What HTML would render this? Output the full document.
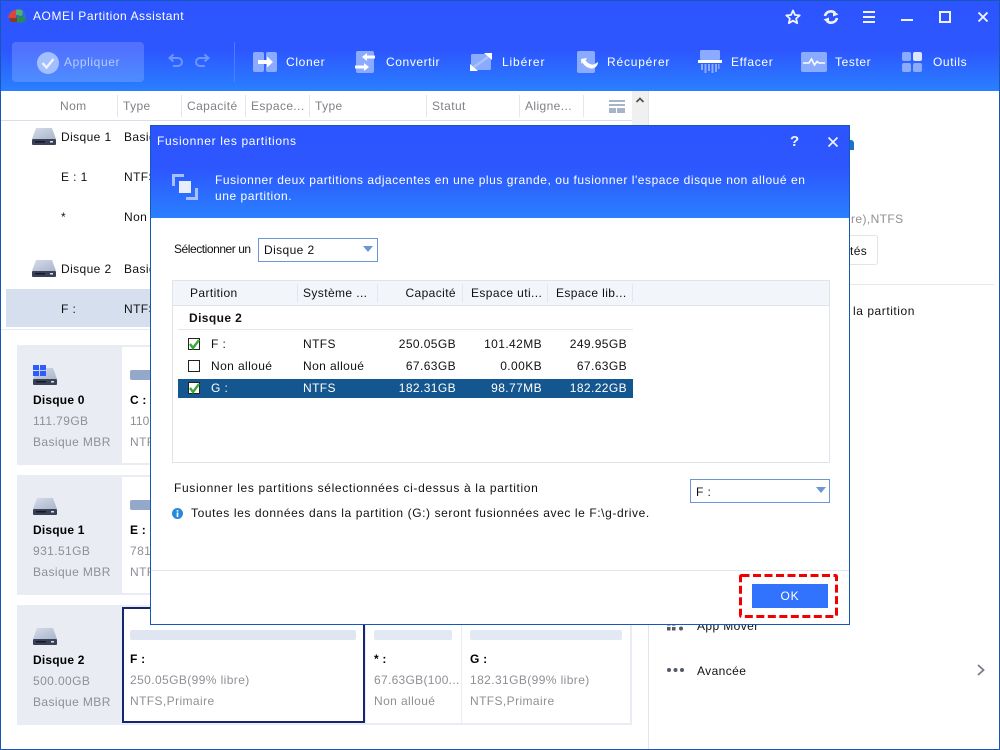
<!DOCTYPE html>
<html lang="fr"><head><meta charset="utf-8"><title>AOMEI Partition Assistant</title>
<style>
html,body{margin:0;padding:0;width:1000px;height:750px;overflow:hidden;background:#fff}
#app{position:relative;width:1000px;height:750px;overflow:hidden;font-family:"Liberation Sans",sans-serif;font-size:12px;color:#111;background:#fff}
.t{position:absolute;white-space:nowrap;line-height:16px;height:16px;letter-spacing:.4px}
.b{position:absolute}
.w{color:#fff}.g{color:#8f8f96}.h{color:#808087}.bd{font-weight:bold;letter-spacing:.2px}
.r{text-align:right}
svg{position:absolute;overflow:visible}
</style></head><body><div id="app">

<!-- main header -->
<div class="b" style="left:0;top:0;width:1000px;height:91px;background:linear-gradient(#2d55ff 0,#2d56ff 55%,#2a80ff 100%)"></div>
<svg style="left:8px;top:9px" width="19" height="16" viewBox="0 0 19 16"><path d="M0 9C1 4 4 1 8 1L8 9Z" fill="#d8453f"/><path d="M8 1C9 0 13 0 15 2L14 7L8 6Z" fill="#4fb36a"/><path d="M15 2C17 3 18 6 18 8L14 8Z" fill="#2f6fd0"/><path d="M1 9L9 9L9 13L3 13Z" fill="#8c3a22"/><path d="M9 7L18 8L17 12L13 14L9 13Z" fill="#2c8a57"/></svg>
<div class="t w" style="left:33px;top:8px;letter-spacing:.55px">AOMEI Partition Assistant</div>

<!-- window controls -->
<svg style="left:785px;top:9px" width="16" height="16" viewBox="0 0 16 16"><path d="M8 1.500L10 6L14.700 6.400L11.100 9.500L12.200 14.200L8 11.700L3.800 14.200L4.900 9.500L1.300 6.400L6 6Z" fill="none" stroke="#eef3ff" stroke-width="1.800" stroke-linejoin="round"/></svg>
<svg style="left:823px;top:9px" width="16" height="16" viewBox="0 0 16 16" fill="none" stroke="#eef3ff" stroke-width="2.600"><path d="M2 7A6 6 0 0 1 12 4"/><path d="M14 9A6 6 0 0 1 4 12"/><path d="M10 1.500L15.500 5.500L10 7.500Z" fill="#eef3ff" stroke="none"/><path d="M6 14.500L.5 10.500L6 8.500Z" fill="#eef3ff" stroke="none"/></svg>
<div class="b" style="left:863px;top:11px;width:12px;height:2px;background:#eef3ff"></div>
<div class="b" style="left:863px;top:16px;width:12px;height:2px;background:#eef3ff"></div>
<div class="b" style="left:863px;top:21px;width:12px;height:2px;background:#eef3ff"></div>
<div class="b" style="left:901px;top:19px;width:12px;height:2px;background:#eef3ff"></div>
<div class="b" style="left:939px;top:11px;width:8px;height:8px;border:2px solid #eef3ff"></div>
<svg style="left:978px;top:12px" width="10" height="10" viewBox="0 0 10 10"><path d="M.5 .5L9.500 9.500M9.500 .5L.5 9.500" stroke="#eef3ff" stroke-width="1.900"/></svg>

<!-- toolbar -->
<div class="b" style="left:12px;top:42px;width:132px;height:40px;border-radius:4px;background:rgba(255,255,255,.17)"></div>
<svg style="left:37px;top:52px" width="22" height="22" viewBox="0 0 22 22"><circle cx="11" cy="11" r="11" fill="#a4bfff"/><path d="M5.500 11L9.500 15.500L16.500 7" fill="none" stroke="#eef3ff" stroke-width="2.400"/></svg>
<div class="t" style="left:64px;top:54px;color:#b6ccff;letter-spacing:.6px">Appliquer</div>
<svg style="left:168px;top:54px" width="16" height="14" viewBox="0 0 16 14" fill="none" stroke="#6c95ff" stroke-width="2"><path d="M2 4H10A4 4 0 0 1 10 12H5"/><path d="M5.500 .5L1.500 4L5.500 7.500"/></svg>
<svg style="left:194px;top:54px" width="16" height="14" viewBox="0 0 16 14" fill="none" stroke="#6c95ff" stroke-width="2"><path d="M14 4H6A4 4 0 0 0 6 12H11"/><path d="M10.500 .5L14.500 4L10.500 7.500"/></svg>
<div class="b" style="left:234px;top:42px;width:1px;height:40px;background:#4f7dff"></div>

<svg style="left:253px;top:52px" width="24" height="20" viewBox="0 0 24 20"><rect x="0" y="0" width="11" height="20" rx="2" fill="#8aabff"/><rect x="13" y="0" width="11" height="20" rx="2" fill="#8aabff"/><path d="M5 8H14V4.500L20 10L14 15.500V12H5Z" fill="#fff"/></svg>
<div class="t w" style="left:286px;top:54px;letter-spacing:.65px">Cloner</div>
<svg style="left:355px;top:51px" width="21" height="22" viewBox="0 0 21 22"><rect x="1" y="0" width="18" height="22" rx="2" fill="#8aabff"/><path d="M7 6L12 2V4.500H20V7.500H12V10Z" fill="#fff"/><path d="M14 16L9 20V17.500H0V14.500H9V12Z" fill="#fff"/></svg>
<div class="t w" style="left:386px;top:54px;letter-spacing:.6px">Convertir</div>
<svg style="left:470px;top:53px" width="22" height="18" viewBox="0 0 22 18"><rect x="1" y="1" width="20" height="16" rx="1.500" fill="#8aabff"/><path d="M4 14L18 4" stroke="#a8c2ff" stroke-width="2.500"/><path d="M14 0H22V7Z" fill="#fff"/><path d="M0 11V18H8Z" fill="#fff"/></svg>
<div class="t w" style="left:502px;top:54px;letter-spacing:.85px">Libérer</div>
<svg style="left:577px;top:51px" width="22" height="22" viewBox="0 0 22 22"><rect x="0" y="0" width="18" height="22" rx="2" fill="#8aabff"/><path d="M4 8L10 7L8.500 9.500C11 12.500 14 14 17 13.500L21 11C21 15 17 19 12 17C9 16 6.500 13.500 5.500 11.500L4.500 13Z" fill="#fff"/></svg>
<div class="t w" style="left:607px;top:54px;letter-spacing:.8px">Récupérer</div>
<svg style="left:698px;top:50px" width="24" height="23" viewBox="0 0 24 23"><rect x="2" y="0" width="20" height="10" rx="1.500" fill="#8aabff"/><rect x="0" y="10" width="24" height="3" fill="#fff"/><path d="M3 14h2v6H3zM6.500 14h2v9h-2zM10 14h2v7h-2zM13.500 14h2v9h-2zM17 14h2v8h-2zM20 14h1.500v5H20z" fill="#8aabff"/></svg>
<div class="t w" style="left:731px;top:54px;letter-spacing:.65px">Effacer</div>
<svg style="left:801px;top:52px" width="26" height="20" viewBox="0 0 26 20"><rect width="26" height="20" rx="2" fill="#8aabff"/><path d="M2 11H8L10.500 7L13.500 13L16 9.500L18 11H24" fill="none" stroke="#fff" stroke-width="1.600"/></svg>
<div class="t w" style="left:835px;top:54px;letter-spacing:.6px">Tester</div>
<svg style="left:902px;top:52px" width="20" height="20" viewBox="0 0 20 20"><rect width="9" height="9" rx="2" fill="#8aabff"/><rect x="11" width="9" height="9" rx="2" fill="#dbe5ff"/><rect y="11" width="9" height="9" rx="2" fill="#8aabff"/><rect x="11" y="11" width="9" height="9" rx="2" fill="#8aabff"/></svg>
<div class="t w" style="left:933px;top:54px;letter-spacing:.6px">Outils</div>

<!-- table header -->
<div class="t h" style="left:60px;top:98px">Nom</div>
<div class="t h" style="left:123px;top:98px">Type</div>
<div class="t h" style="left:187px;top:98px">Capacité</div>
<div class="t h" style="left:251px;top:98px">Espace...</div>
<div class="t h" style="left:315px;top:98px">Type</div>
<div class="t h" style="left:432px;top:98px">Statut</div>
<div class="t h" style="left:525px;top:98px">Aligne...</div>
<div class="b" style="left:117px;top:95px;width:1px;height:22px;background:#e4e7ee"></div>
<div class="b" style="left:181px;top:95px;width:1px;height:22px;background:#e4e7ee"></div>
<div class="b" style="left:245px;top:95px;width:1px;height:22px;background:#e4e7ee"></div>
<div class="b" style="left:309px;top:95px;width:1px;height:22px;background:#e4e7ee"></div>
<div class="b" style="left:426px;top:95px;width:1px;height:22px;background:#e4e7ee"></div>
<div class="b" style="left:519px;top:95px;width:1px;height:22px;background:#e4e7ee"></div>
<div class="b" style="left:583px;top:95px;width:1px;height:22px;background:#e4e7ee"></div>
<div class="b" style="left:609px;top:100px;width:16px;height:2px;background:#a6b4c6"></div>
<div class="b" style="left:609px;top:104px;width:16px;height:2px;background:#a6b4c6"></div>
<div class="b" style="left:609px;top:108px;width:7px;height:5px;background:#a6b4c6"></div>
<div class="b" style="left:617px;top:108px;width:8px;height:5px;background:#a6b4c6"></div>
<div class="b" style="left:0;top:120px;width:632px;height:1px;background:#d8deea"></div>
<div class="b" style="left:632px;top:91px;width:16px;height:239px;background:#f0f0f0"></div>
<div class="b" style="left:648px;top:91px;width:1px;height:659px;background:#dfe5f0"></div>
<svg style="left:636px;top:97px" width="8" height="6" viewBox="0 0 8 6"><path d="M.5 5L4 1.500L7.500 5" fill="none" stroke="#555" stroke-width="1.800"/></svg>

<!-- tree rows -->
<svg style="left:32px;top:128px" width="24" height="17" viewBox="0 0 24 17"><defs><linearGradient id="hd" x1="0" y1="0" x2="1" y2="1"><stop offset="0" stop-color="#d6dcea"/><stop offset="1" stop-color="#a9b5cb"/></linearGradient></defs><path d="M4 0H20L24 11H0Z" fill="url(#hd)"/><rect y="11" width="24" height="6" rx="1" fill="#3b4155"/><rect x="3" y="13" width="10" height="1.500" fill="#14182a"/><rect x="18" y="13" width="3" height="1.500" fill="#d8e4f4"/></svg>
<div class="t" style="left:61px;top:129px">Disque 1</div><div class="t" style="left:124px;top:129px">Basique MBR</div>
<div class="t" style="left:61px;top:169px">E : 1</div><div class="t" style="left:124px;top:169px">NTFS</div>
<div class="t" style="left:61px;top:209px">*</div><div class="t" style="left:124px;top:209px">Non alloué</div>
<svg style="left:32px;top:260px" width="24" height="17" viewBox="0 0 24 17"><path d="M4 0H20L24 11H0Z" fill="url(#hd)"/><rect y="11" width="24" height="6" rx="1" fill="#3b4155"/><rect x="3" y="13" width="10" height="1.500" fill="#14182a"/><rect x="18" y="13" width="3" height="1.500" fill="#d8e4f4"/></svg>
<div class="t" style="left:61px;top:261px">Disque 2</div><div class="t" style="left:124px;top:261px">Basique MBR</div>
<div class="b" style="left:6px;top:289px;width:626px;height:38px;background:#d5dfee"></div>
<div class="t" style="left:61px;top:301px">F :</div><div class="t" style="left:124px;top:301px">NTFS</div>
<div class="b" style="left:0;top:329px;width:632px;height:1px;background:#e6eaf1"></div>

<!-- disk cards -->
<div class="b" style="left:17px;top:345px;width:615px;height:120px;background:#e9ecf3"></div>
<div class="b" style="left:122px;top:347px;width:508px;height:116px;background:#fff"></div>
<div class="b" style="left:17px;top:475px;width:615px;height:120px;background:#e9ecf3"></div>
<div class="b" style="left:122px;top:477px;width:508px;height:116px;background:#fff"></div>
<div class="b" style="left:17px;top:605px;width:615px;height:120px;background:#e9ecf3"></div>
<div class="b" style="left:122px;top:607px;width:243px;height:116px;background:#fff;box-shadow:inset 0 0 0 2px #14266f"></div>
<div class="b" style="left:366px;top:607px;width:95px;height:116px;background:#fff"></div>
<div class="b" style="left:462px;top:607px;width:168px;height:116px;background:#fff"></div>

<svg style="left:33px;top:365px" width="24" height="20" viewBox="0 0 24 20"><path d="M4 3H20L24 14H0Z" fill="url(#hd)"/><rect y="14" width="24" height="6" rx="1" fill="#3b4155"/><rect x="3" y="16" width="10" height="1.500" fill="#14182a"/><rect x="18" y="16" width="3" height="1.500" fill="#d8e4f4"/><path d="M0 0h6v5H0zM7 0h6v5H7zM0 6h6v5H0zM7 6h6v5H7z" fill="#2d5cff"/></svg>
<div class="t bd" style="left:33px;top:392px;color:#000">Disque 0</div>
<div class="t g" style="left:33px;top:413px">111.79GB</div>
<div class="t g" style="left:33px;top:434px">Basique MBR</div>
<div class="b" style="left:130px;top:370px;width:226px;height:10px;border-radius:2px;background:#94a9c9"></div>
<div class="t bd" style="left:130px;top:392px;color:#000">C : System</div>
<div class="t g" style="left:130px;top:413px;letter-spacing:.1px">110.58GB</div>
<div class="t g" style="left:130px;top:434px">NTFS,Primaire</div>

<svg style="left:33px;top:498px" width="24" height="17" viewBox="0 0 24 17"><path d="M4 0H20L24 11H0Z" fill="url(#hd)"/><rect y="11" width="24" height="6" rx="1" fill="#3b4155"/><rect x="3" y="13" width="10" height="1.500" fill="#14182a"/><rect x="18" y="13" width="3" height="1.500" fill="#d8e4f4"/></svg>
<div class="t bd" style="left:33px;top:522px;color:#000">Disque 1</div>
<div class="t g" style="left:33px;top:543px">931.51GB</div>
<div class="t g" style="left:33px;top:564px">Basique MBR</div>
<div class="b" style="left:130px;top:500px;width:226px;height:10px;border-radius:2px;background:#94a9c9"></div>
<div class="t bd" style="left:130px;top:522px;color:#000">E : 1</div>
<div class="t g" style="left:130px;top:543px">781.51GB</div>
<div class="t g" style="left:130px;top:564px">NTFS,Primaire</div>

<svg style="left:33px;top:628px" width="24" height="17" viewBox="0 0 24 17"><path d="M4 0H20L24 11H0Z" fill="url(#hd)"/><rect y="11" width="24" height="6" rx="1" fill="#3b4155"/><rect x="3" y="13" width="10" height="1.500" fill="#14182a"/><rect x="18" y="13" width="3" height="1.500" fill="#d8e4f4"/></svg>
<div class="t bd" style="left:33px;top:652px;color:#000">Disque 2</div>
<div class="t g" style="left:33px;top:673px">500.00GB</div>
<div class="t g" style="left:33px;top:694px">Basique MBR</div>
<div class="b" style="left:130px;top:630px;width:226px;height:10px;border-radius:2px;background:#dfe6f2"></div>
<div class="t bd" style="left:130px;top:651px;color:#000">F :</div>
<div class="t g" style="left:130px;top:672px">250.05GB(99% libre)</div>
<div class="t g" style="left:130px;top:693px">NTFS,Primaire</div>
<div class="b" style="left:374px;top:630px;width:78px;height:10px;border-radius:2px;background:#e3e9f3"></div>
<div class="t bd" style="left:374px;top:651px;color:#000">* :</div>
<div class="t g" style="left:374px;top:672px;letter-spacing:.3px">67.63GB(100...</div>
<div class="t g" style="left:374px;top:693px">Non alloué</div>
<div class="b" style="left:470px;top:630px;width:152px;height:10px;border-radius:2px;background:#e3e9f3"></div>
<div class="t bd" style="left:470px;top:651px;color:#000">G :</div>
<div class="t g" style="left:470px;top:672px">182.31GB(99% libre)</div>
<div class="t g" style="left:470px;top:693px">NTFS,Primaire</div>

<!-- right panel -->
<div class="b" style="left:848px;top:140px;width:6px;height:10px;background:#1a73c8;border-radius:0 3px 0 0"></div>
<div class="t g" style="left:851px;top:211px">re),NTFS</div>
<div class="b" style="left:800px;top:235px;width:76px;height:28px;border:1px solid #dfe3ea;border-radius:3px"></div>
<div class="t" style="left:850px;top:243px">tés</div>
<div class="b" style="left:649px;top:284px;width:345px;height:1px;background:#e3e7f0"></div>
<div class="t" style="left:853px;top:303px;letter-spacing:.55px">la partition</div>
<svg style="left:667px;top:622px" width="17" height="10" viewBox="0 0 17 10" fill="#555a68"><rect width="3.500" height="3.500" y="0"/><rect x="5" width="3.500" height="3.500"/><rect y="5" width="3.500" height="3.500"/><rect x="5" y="5" width="3.500" height="3.500"/><rect x="12" y="4.500" width="4" height="4" rx="2"/></svg>
<div class="t" style="left:697px;top:618px">App Mover</div>
<svg style="left:667px;top:667px" width="17" height="6" viewBox="0 0 17 6" fill="#555a68"><circle cx="2" cy="3" r="2"/><circle cx="8.500" cy="3" r="2"/><circle cx="15" cy="3" r="2"/></svg>
<div class="t" style="left:697px;top:663px">Avancée</div>
<svg style="left:977px;top:664px" width="8" height="12" viewBox="0 0 8 12"><path d="M1 1L6.500 6L1 11" fill="none" stroke="#777c88" stroke-width="1.800"/></svg>

<!-- window frame -->
<div class="b" style="left:0;top:0;width:998px;height:748px;border:1px solid #1558b8"></div>

<!-- dialog -->
<div class="b" style="left:150px;top:125px;width:698px;height:498px;border:1px solid #1558b8;background:#fff"></div>
<div class="b" style="left:151px;top:126px;width:698px;height:92px;background:linear-gradient(#2d55ff 0,#2d56ff 45%,#2a80ff 100%)"></div>
<div class="t w" style="left:157px;top:133px;letter-spacing:.65px">Fusionner les partitions</div>
<div class="t w" style="left:790px;top:134px;font-size:15px;font-weight:bold;letter-spacing:0;color:#eef3ff">?</div>
<svg style="left:828px;top:137px" width="10" height="10" viewBox="0 0 10 10"><path d="M.5 .5L9.500 9.500M9.500 .5L.5 9.500" stroke="#eef3ff" stroke-width="1.700"/></svg>
<svg style="left:172px;top:174px" width="26" height="26" viewBox="0 0 26 26"><path d="M0 0H12V3H3V12H0Z" fill="#a8c0ff"/><rect x="7" y="7" width="12" height="12" fill="#e8eeff"/><path d="M26 26H14V23H23V14H26Z" fill="#a8c0ff"/></svg>
<div class="t w" style="left:215px;top:172px;letter-spacing:.55px">Fusionner deux partitions adjacentes en une plus grande, ou fusionner l'espace disque non alloué en</div>
<div class="t w" style="left:215px;top:188px;letter-spacing:.55px">une partition.</div>

<div class="t" style="left:174px;top:241px;letter-spacing:-.45px">Sélectionner un</div>
<div class="b" style="left:258px;top:238px;width:118px;height:22px;border:1px solid #6a96d8"></div>
<div class="t" style="left:264px;top:242px">Disque 2</div>
<svg style="left:363px;top:246px" width="10" height="6" viewBox="0 0 10 6"><path d="M0 0H10L5 6Z" fill="#6a96d8"/></svg>

<div class="b" style="left:172px;top:280px;width:656px;height:181px;border:1px solid #dfe3ea"></div>
<div class="b" style="left:173px;top:281px;width:656px;height:24px;background:#f2f5fa;border-bottom:1px solid #dfe3ea"></div>
<div class="b" style="left:297px;top:284px;width:1px;height:18px;background:#e2e6ee"></div>
<div class="b" style="left:377px;top:284px;width:1px;height:18px;background:#e2e6ee"></div>
<div class="b" style="left:462px;top:284px;width:1px;height:18px;background:#e2e6ee"></div>
<div class="b" style="left:547px;top:284px;width:1px;height:18px;background:#e2e6ee"></div>
<div class="b" style="left:632px;top:284px;width:1px;height:18px;background:#e2e6ee"></div>
<div class="t" style="left:190px;top:285px">Partition</div>
<div class="t" style="left:303px;top:285px">Système ...</div>
<div class="t r" style="left:376px;top:285px;width:80px">Capacité</div>
<div class="t" style="left:471px;top:285px">Espace uti...</div>
<div class="t" style="left:556px;top:285px">Espace lib...</div>
<div class="t bd" style="left:189px;top:310px;letter-spacing:.4px">Disque 2</div>
<div class="b" style="left:178px;top:329px;width:455px;height:1px;background:#e3e7ee"></div>

<div class="b" style="left:188px;top:338px;width:10px;height:10px;border:1px solid #222;background:#fff"></div>
<svg style="left:188px;top:338px" width="12" height="12" viewBox="0 0 12 12"><path d="M2 6L5 10L11 2" fill="none" stroke="#3aa83a" stroke-width="2.400"/></svg>
<div class="t" style="left:211px;top:336px">F :</div><div class="t" style="left:303px;top:336px">NTFS</div>
<div class="t r" style="left:376px;top:336px;width:80px">250.05GB</div><div class="t r" style="left:462px;top:336px;width:80px">101.42MB</div><div class="t r" style="left:547px;top:336px;width:80px">249.95GB</div>

<div class="b" style="left:188px;top:360px;width:10px;height:10px;border:1px solid #222;background:#fff"></div>
<div class="t" style="left:211px;top:358px">Non alloué</div><div class="t" style="left:303px;top:358px">Non alloué</div>
<div class="t r" style="left:376px;top:358px;width:80px">67.63GB</div><div class="t r" style="left:462px;top:358px;width:80px">0.00KB</div><div class="t r" style="left:547px;top:358px;width:80px">67.63GB</div>

<div class="b" style="left:178px;top:379px;width:455px;height:19px;background:#14568f"></div>
<div class="b" style="left:188px;top:382px;width:10px;height:10px;border:1px solid #222;background:#fff"></div>
<svg style="left:188px;top:382px" width="12" height="12" viewBox="0 0 12 12"><path d="M2 6L5 10L11 2" fill="none" stroke="#3aa83a" stroke-width="2.400"/></svg>
<div class="t w" style="left:211px;top:380px">G :</div><div class="t w" style="left:303px;top:380px">NTFS</div>
<div class="t r w" style="left:376px;top:380px;width:80px">182.31GB</div><div class="t r w" style="left:462px;top:380px;width:80px">98.77MB</div><div class="t r w" style="left:547px;top:380px;width:80px">182.22GB</div>

<div class="t" style="left:174px;top:480px;letter-spacing:.65px">Fusionner les partitions sélectionnées ci-dessus à la partition</div>
<div class="b" style="left:690px;top:479px;width:138px;height:22px;border:1px solid #6a96d8"></div>
<div class="t" style="left:696px;top:484px">F :</div>
<svg style="left:816px;top:487px" width="10" height="6" viewBox="0 0 10 6"><path d="M0 0H10L5 6Z" fill="#6a96d8"/></svg>
<svg style="left:172px;top:508px" width="11" height="11" viewBox="0 0 11 11"><circle cx="5.500" cy="5.500" r="5.500" fill="#2a88dc"/><rect x="4.700" y="4.500" width="1.600" height="4.500" fill="#fff"/><rect x="4.700" y="2" width="1.600" height="1.600" fill="#fff"/></svg>
<div class="t" style="left:191px;top:505px;letter-spacing:.59px">Toutes les données dans la partition (G:) seront fusionnées avec le F:\g-drive.</div>

<div class="b" style="left:151px;top:570px;width:698px;height:1px;background:#e4e6ec"></div>
<svg style="left:739px;top:574px" width="100" height="45" viewBox="0 0 100 45"><rect x="1.500" y="1.500" width="96" height="41" rx="1" fill="none" stroke="#f00000" stroke-width="3" stroke-dasharray="8 3.500"/></svg>
<div class="b" style="left:752px;top:584px;width:76px;height:24px;background:#3273fd"></div>
<div class="t w" style="left:752px;top:588px;width:76px;text-align:center;letter-spacing:.8px">OK</div>

</div></body></html>
